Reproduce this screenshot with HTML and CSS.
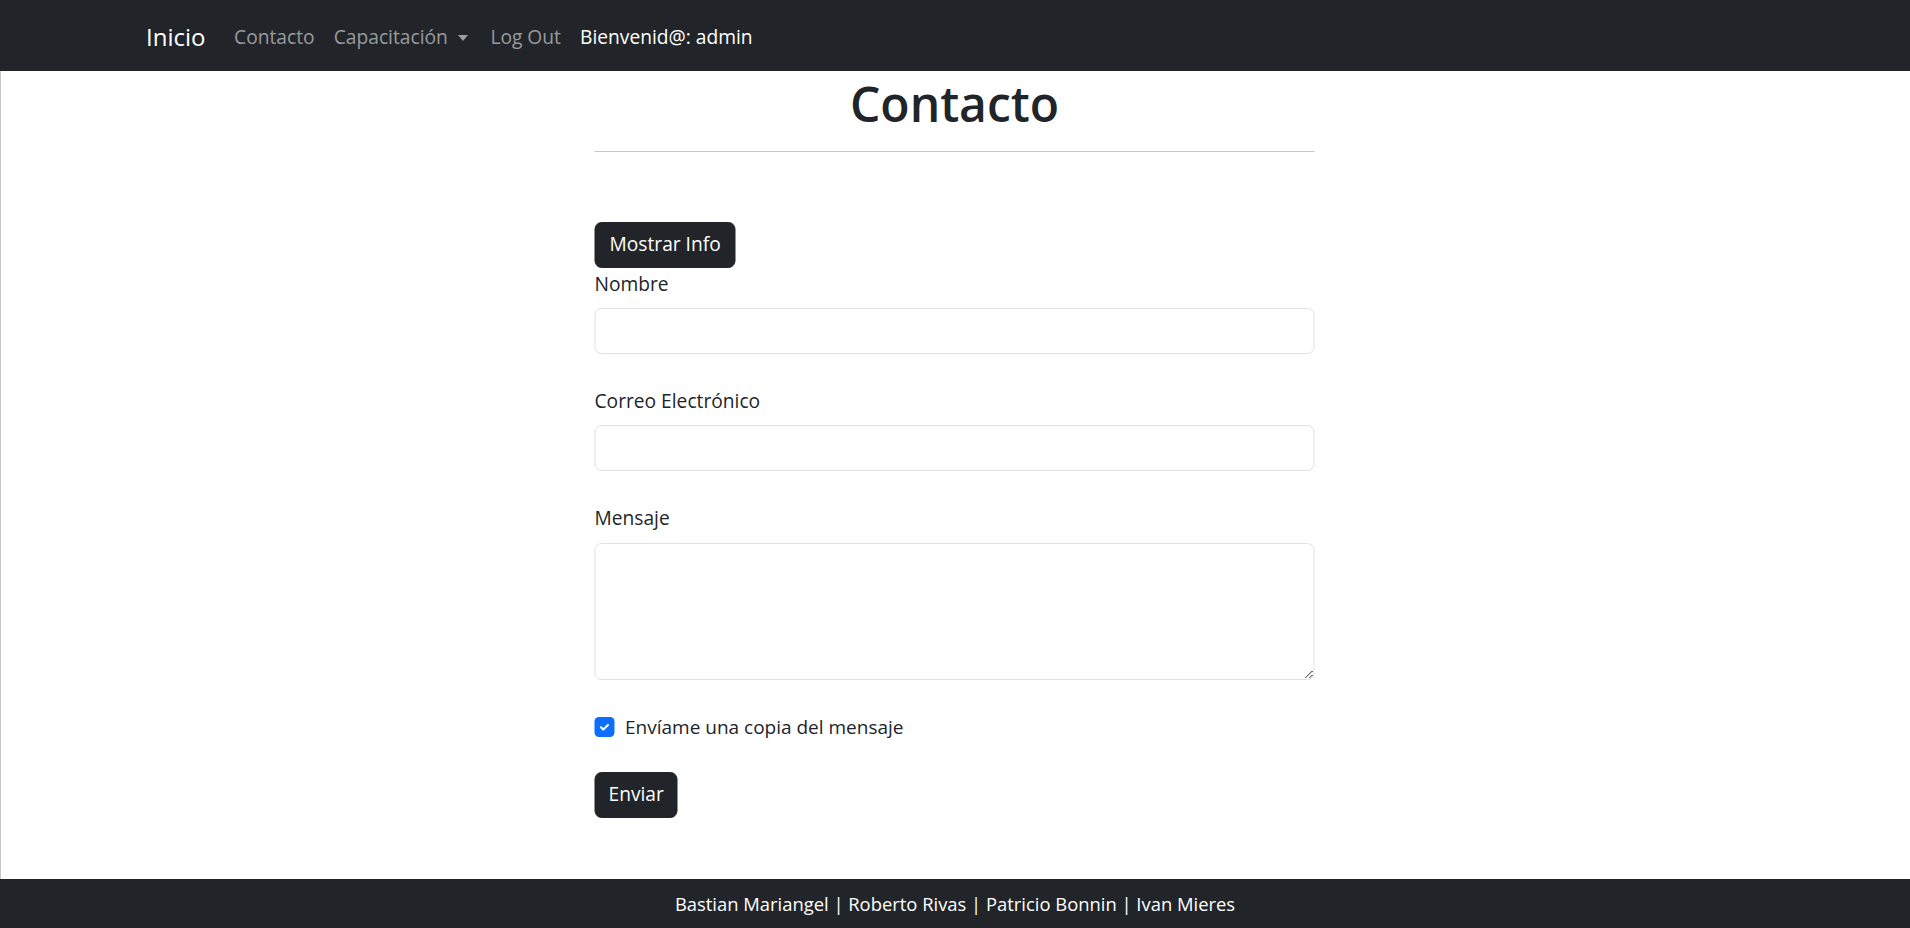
FILE: index.html
```html
<!DOCTYPE html>
<html lang="es">
<head>
<meta charset="utf-8">
<title>Contacto</title>
<link rel="stylesheet" href="styles.css">
</head>
<body>
<header class="navbar">
  <a class="brand" href="#">Inicio</a>
  <nav class="nav">
    <a class="nav-link" href="#">Contacto</a>
    <a class="nav-link dropdown" href="#">Capacitación<span class="caret"></span></a>
    <a class="nav-link" href="#">Log Out</a>
    <span class="nav-link active">Bienvenid@: admin</span>
  </nav>
</header>
<main class="page">
  <div class="content">
    <h1 class="title">Contacto</h1>
    <hr class="divider">
    <button class="btn info-btn" type="button">Mostrar Info</button>
    <form class="form">
      <div class="group">
        <label class="label" for="nombre">Nombre</label>
        <input class="control" id="nombre" type="text">
      </div>
      <div class="group">
        <label class="label" for="correo">Correo Electrónico</label>
        <input class="control" id="correo" type="email">
      </div>
      <div class="group">
        <label class="label" for="mensaje">Mensaje</label>
        <textarea class="control area" id="mensaje"></textarea>
      </div>
      <label class="check">
        <span class="box"><svg viewBox="0 0 20 20" width="14" height="14"><path d="M5 10.5l3.2 3.2L15 7" fill="none" stroke="#fff" stroke-width="3" stroke-linecap="round" stroke-linejoin="round"/></svg></span>
        <span>Envíame una copia del mensaje</span>
      </label>
      <button class="btn send-btn" type="button">Enviar</button>
    </form>
  </div>
</main>
<footer class="footer">Bastian Mariangel | Roberto Rivas | Patricio Bonnin | Ivan Mieres</footer>
</body>
</html>
```
FILE: styles.css
```css
* { box-sizing: border-box; }
html, body { height: 100%; }
body {
  margin: 0;
  font-family: "Open Sans", "Noto Sans", sans-serif;
  font-size: 19.2px;
  line-height: 28.8px;
  color: #212529;
  background: #fff;
  display: flex;
  flex-direction: column;
  min-height: 100vh;
}
.navbar {
  height: 71px;
  background: #212529;
  display: flex;
  align-items: center;
  padding-left: 146px;
  padding-top: 3px;
  flex-shrink: 0;
}
.brand {
  color: #fff;
  text-decoration: none;
  font-size: 24px;
  line-height: 36px;
  margin-right: 19px;
}
.nav { display: flex; align-items: center; }
.nav-link {
  color: rgba(255,255,255,.55);
  text-decoration: none;
  padding: 0 9.6px;
}
.nav-link.dropdown { padding-right: 13px; }
.nav-link.active { color: #fff; }
.caret {
  display: inline-block;
  margin-left: 10px;
  vertical-align: 3px;
  border-top: 6px solid currentColor;
  border-left: 5.5px solid transparent;
  border-right: 5.5px solid transparent;
}
.page {
  flex: 1;
  box-shadow: inset 1px 0 0 #c9c9c9;
}
.content {
  width: 720px;
  margin: 0 auto;
  transform: translateX(-0.5px);
}
.title {
  margin: 4px 0 0;
  text-align: center;
  font-size: 48px;
  line-height: 57.6px;
  font-weight: 600;
}
.divider {
  margin: 18px 0 0;
  border: 0;
  border-top: 1px solid #c8c9ca;
}
.btn {
  display: block;
  font: inherit;
  color: #fff;
  background: #212529;
  border: 1px solid #212529;
  border-radius: 7px;
  padding: 7.6px 14px;
  line-height: 28.8px;
}
.info-btn { margin-top: 70px; }
.form { margin-top: 2px; }
.group { margin-bottom: 33px; }
.label { display: block; margin-bottom: 9.6px; }
.control {
  display: block;
  width: 100%;
  height: 46px;
  font: inherit;
  border: 1px solid #dee2e6;
  border-radius: 7px;
  padding: 7px 14px;
  background: #fff;
}
.area { height: 137px; resize: vertical; }
.check {
  display: flex;
  align-items: center;
  gap: 11px;
  font-size: 19px;
}
.box {
  width: 19.5px;
  height: 19.5px;
  border-radius: 4.5px;
  background: #0d6efd;
  display: flex;
  align-items: center;
  justify-content: center;
}
.box svg { display: block; }
.send-btn { margin-top: 30px; padding-left: 13px; padding-right: 13px; }
.footer {
  height: 49px;
  background: #212529;
  color: #fff;
  text-align: center;
  font-size: 18.4px;
  line-height: 49px;
  flex-shrink: 0;
}
```
